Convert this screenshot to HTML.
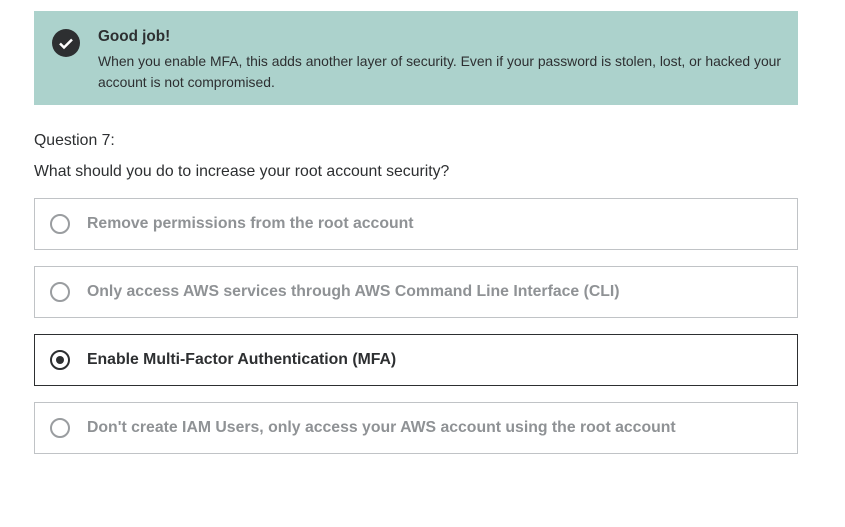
<!DOCTYPE html>
<html><head><style>
body{margin:0;width:845px;height:527px;background:#fff;font-family:"Liberation Sans",sans-serif;color:#2d2f31;position:relative;overflow:hidden}
.alert{position:absolute;left:34px;top:11px;width:764px;height:94px;background:#acd2cc}
.ic{position:absolute;left:18px;top:18px;width:28px;height:28px;border-radius:50%;background:#2d2f31}
.t{position:absolute;left:64px;top:17px;font-weight:bold;font-size:15.3px}
.d{position:absolute;left:64px;top:40px;width:700px;font-size:13.9px;line-height:21px}
.q{position:absolute;left:34px;font-size:15.8px}
.o{position:absolute;left:34px;width:762px;height:50px;border:1px solid #c0c3c6;box-sizing:content-box}
.o.s{border-color:#2d2f31}
.r{position:absolute;left:15px;top:15px;width:20px;height:20px;border:2px solid #9a9da0;border-radius:50%;box-sizing:border-box}
.s .r{border-color:#2d2f31}
.s .r:after{content:"";position:absolute;left:4px;top:4px;width:8px;height:8px;border-radius:50%;background:#2d2f31}
.l{position:absolute;left:52px;top:16px;font-size:15.8px;font-weight:bold;color:#8f9295}
.s .l{color:#2d2f31}
</style></head><body>
<div class="alert"><div class="ic"><svg width="28" height="28"><path d="M8 14.5l4 4 8-8" stroke="#fff" stroke-width="2.5" fill="none"/></svg></div>
<div class="t">Good job!</div>
<div class="d">When you enable MFA, this adds another layer of security. Even if your password is stolen, lost, or hacked your account is not compromised.</div></div>
<div class="q" style="top:132px">Question 7:</div>
<div class="q" style="top:163px">What should you do to increase your root account security?</div>
<div class="o" style="top:198px"><div class="r"></div><div class="l">Remove permissions from the root account</div></div>
<div class="o" style="top:266px"><div class="r"></div><div class="l">Only access AWS services through AWS Command Line Interface (CLI)</div></div>
<div class="o s" style="top:334px"><div class="r"></div><div class="l">Enable Multi-Factor Authentication (MFA)</div></div>
<div class="o" style="top:402px"><div class="r"></div><div class="l">Don't create IAM Users, only access your AWS account using the root account</div></div>
</body></html>
